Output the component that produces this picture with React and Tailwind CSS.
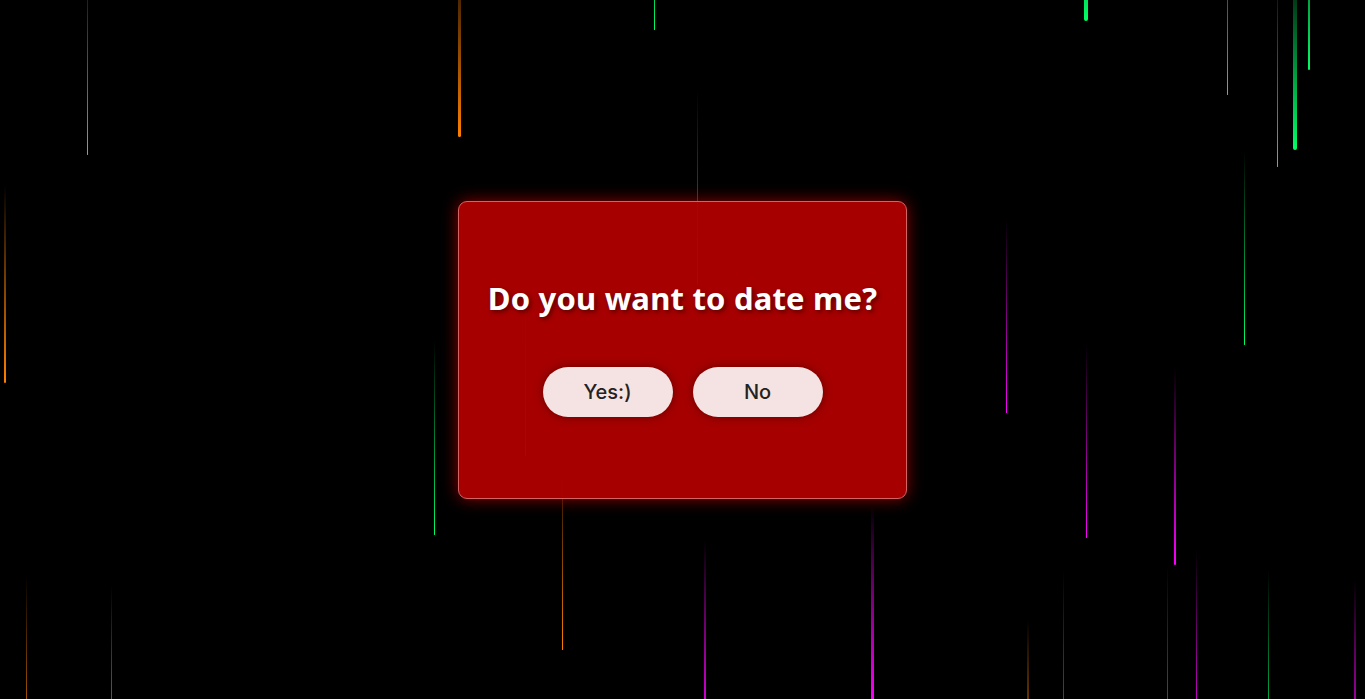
import React from 'react';

// falling streaks: x, top, bottom, width, colour
const ORANGE = '#ff8000';
const GREEN = '#00ff66';
const PINK = '#ff00ff';

const drops = [
  [87, -40, 155, 1, ORANGE],
  [458, -60, 137, 3, ORANGE],
  [654, -160, 30, 1, GREEN],
  [1084, -170, 21, 4, GREEN],
  [1227, -100, 95, 1, ORANGE],
  [1277, -30, 167, 1, ORANGE],
  [1293, -45, 150, 4, GREEN],
  [1308, -125, 70, 2, GREEN],
  [4, 185, 383, 2, ORANGE],
  [697, 90, 285, 1, PINK],
  [525, 262, 456, 1, PINK],
  [562, 455, 650, 1, ORANGE],
  [434, 340, 535, 1, GREEN],
  [1006, 218, 413, 1, PINK],
  [1086, 343, 538, 1, PINK],
  [1174, 368, 565, 2, PINK],
  [1244, 150, 345, 1, GREEN],
  [26, 575, 770, 1, ORANGE],
  [111, 585, 780, 1, ORANGE],
  [704, 540, 735, 2, PINK],
  [871, 505, 700, 3, PINK],
  [1027, 620, 815, 2, ORANGE],
  [1063, 570, 765, 1, PINK],
  [1167, 565, 760, 1, PINK],
  [1196, 548, 745, 1, PINK],
  [1268, 570, 765, 1, GREEN],
  [1354, 580, 775, 2, PINK],
];

const Drop = ({ x, top, bottom, w, color }) => (
  <div
    className="absolute rounded-b-full"
    style={{
      left: x,
      top,
      width: w,
      height: bottom - top,
      background: `linear-gradient(to bottom, transparent, ${color})`,
    }}
  />
);

export default function App() {
  return (
    <div className="relative w-full h-[699px] overflow-hidden bg-black">
      {drops.map(([x, top, bottom, w, color], i) => (
        <Drop key={i} x={x} top={top} bottom={bottom} w={w} color={color} />
      ))}

      <div className="relative flex h-full items-center justify-center">
        <div className="flex h-[298px] w-[449px] flex-col items-center justify-center gap-[51px] rounded-[9px] border border-[#d46464] bg-[rgba(176,0,0,0.94)] pb-[3px] shadow-[0_0_16px_rgba(255,0,0,0.55)]">
          <h1 className="text-[31px] font-bold leading-9 text-white [font-family:'Noto_Sans',sans-serif] [text-shadow:2px_2px_4px_rgba(60,0,0,0.7)] tracking-[0.2px]">
            Do you want to date me?
          </h1>
          <div className="flex gap-5">
            <button className="h-[50px] w-[130px] rounded-full bg-[#f5e3e3] text-[20px] font-medium text-[#222] [font-family:Inter,sans-serif] shadow-[0_0_8px_rgba(60,0,0,0.6)]">
              Yes:)
            </button>
            <button className="h-[50px] w-[130px] rounded-full bg-[#f5e3e3] text-[20px] font-medium text-[#222] [font-family:Inter,sans-serif] shadow-[0_0_8px_rgba(60,0,0,0.6)]">
              No
            </button>
          </div>
        </div>
      </div>
    </div>
  );
}
